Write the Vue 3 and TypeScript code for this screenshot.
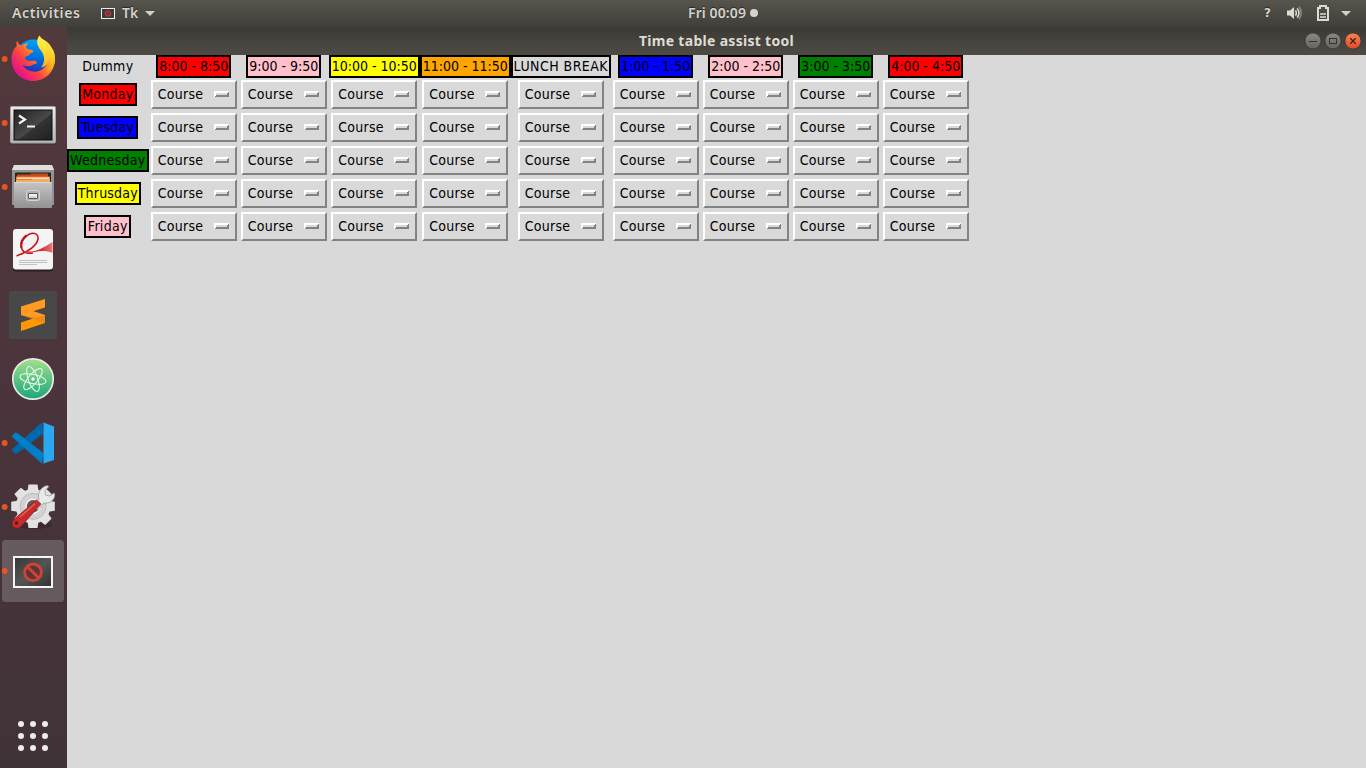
<script setup lang="ts">
interface Heading {
  text: string
  color: string
  spacing: number
  width: number
}

const times: Heading[] = [
  { text: '8:00 - 8:50', color: '#ff0000', spacing: 0, width: 75 },
  { text: '9:00 - 9:50', color: '#ffc0cb', spacing: 0, width: 75 },
  { text: '10:00 - 10:50', color: '#ffff00', spacing: 0, width: 91 },
  { text: '11:00 - 11:50', color: '#ffa500', spacing: 0, width: 91 },
  { text: 'LUNCH BREAK', color: '#d9d9d9', spacing: 0.45, width: 100 },
  { text: '1:00 - 1:50', color: '#0000ff', spacing: 0, width: 75 },
  { text: '2:00 - 2:50', color: '#ffc0cb', spacing: 0, width: 75 },
  { text: '3:00 - 3:50', color: '#008000', spacing: 0, width: 75 },
  { text: '4:00 - 4:50', color: '#ff0000', spacing: 0, width: 75 },
]

const days: Heading[] = [
  { text: 'Monday', color: '#ff0000', spacing: 0.25, width: 58 },
  { text: 'Tuesday', color: '#0000ff', spacing: 0.25, width: 61 },
  { text: 'Wednesday', color: '#008000', spacing: 0.3, width: 82 },
  { text: 'Thrusday', color: '#ffff00', spacing: 0.2, width: 66 },
  { text: 'Friday', color: '#ffc0cb', spacing: 0.3, width: 47 },
]

const labelStyle = (h: Heading) => ({
  background: h.color,
  width: h.width + 'px',
  letterSpacing: h.spacing + 'px',
})

const gearTeeth = [0, 45, 90, 135, 180, 225, 270, 315]
const appDots = [0, 1, 2, 3, 4, 5, 6, 7, 8]
</script>

<template>
  <div class="desktop">
    <header class="topbar">
      <div class="top-left">
        <span class="activities">Activities</span>
        <svg class="tk-mini" width="14" height="11" viewBox="0 0 14 11">
          <rect x="0.5" y="0.5" width="13" height="10" fill="#3c3c3c" stroke="#eee" />
          <circle cx="7" cy="5.5" r="2.5" fill="none" stroke="#d0343a" stroke-width="1.2" />
          <path d="M5.3 3.8l3.4 3.4" stroke="#d0343a" />
        </svg>
        <span class="tk-name">Tk</span>
        <svg class="arrow" width="10" height="5" viewBox="0 0 10 5"><path d="M0 0h10L5 5z" fill="#d3d0ca" /></svg>
      </div>
      <div class="clock"><span>Fri 00:09</span><i class="clock-dot"></i></div>
      <div class="top-right">
        <span class="question">?</span>
        <svg class="volume" width="16" height="14" viewBox="0 0 16 14">
          <path d="M0 4.5h3L7 1v12L3 9.5H0z" fill="#dcdad5" />
          <path d="M8.5 4.3q1.8 2.7 0 5.4" stroke="#dcdad5" stroke-width="1.5" fill="none" />
          <path d="M10.2 2.4q3.4 4.6 0 9.2" stroke="#dcdad5" stroke-width="1.5" fill="none" />
          <path d="M12 .8q4.4 6.2 0 12.4" stroke="#8b8982" stroke-width="1.5" fill="none" />
        </svg>
        <svg class="battery" width="12" height="16" viewBox="0 0 12 16">
          <path d="M3 3V1h6v2h2v12H1V3z" fill="none" stroke="#dcdad5" stroke-width="2" />
          <path d="M3 9h6M3 12h6" stroke="#dcdad5" stroke-width="1.5" />
        </svg>
        <svg class="arrow" width="10" height="5" viewBox="0 0 10 5"><path d="M0 0h10L5 5z" fill="#d3d0ca" /></svg>
      </div>
    </header>

    <div class="body">
      <aside class="dock">
        <!-- Firefox -->
        <svg class="slot" viewBox="0 0 67 64">
          <defs>
            <linearGradient id="ffBody" x1="0.9" y1="0.1" x2="0.15" y2="0.75">
              <stop offset="0" stop-color="#ffd52e" /><stop offset=".4" stop-color="#ff9420" />
              <stop offset=".7" stop-color="#ff4242" /><stop offset="1" stop-color="#e61785" />
            </linearGradient>
            <linearGradient id="ffBlue" x1="0.6" y1="0" x2="0.4" y2="1">
              <stop offset="0" stop-color="#00a5ff" /><stop offset=".6" stop-color="#0061d6" /><stop offset="1" stop-color="#41158a" />
            </linearGradient>
            <linearGradient id="ffTail" x1="0" y1="0" x2="0" y2="1">
              <stop offset="0" stop-color="#fff44f" /><stop offset=".5" stop-color="#ffd42c" /><stop offset="1" stop-color="#ff9a1c" />
            </linearGradient>
          </defs>
          <circle class="run-dot" cx="4.700" cy="32" r="2.900" />
          <circle cx="33" cy="31" r="18.500" fill="url(#ffBlue)" />
          <path d="M17 13.500c-.8 2.500-.6 4-.2 5.500-3.500 3-5.500 8-5.300 14C12 45 21.500 54 33 54c12 0 22-9 22-22 0-5-1.500-9-4-12-1-2-3-4-5-5 3 7 4 14 2 20-2.500 7-9 10.500-15 9.500-6-.7-9.500-4-10.500-7 3 2 7 2.300 10 .5 2-1.300 4-1 4.500-2-.5-2-2-2.500-5-2.200-3 .2-5 .5-7-2-.2-2 2-3.500 4-3.200.5-2 2-2.500 4-3.500.3-1.500-.3-2.300-2-2.300-2.500-.2-4-.8-5-2 .2-2 1-3 2.500-4.500-3 0-5.500 1-7.500 2.500-2-1.500-3.200-3-4-5.300z" fill="url(#ffBody)" />
          <path d="M39.500 8.500c-4 5-2.500 10 1 14.500 4.500 5.500 5 12 .5 17.500 6-1 8-5 8.500-8 1 5-1 10-4 13 7-3 10-9 9.500-15-.5-5-2-8-4-10.500-1-3-3.500-5-6-6.500-2.500-1.500-4-2-5.500-5z" fill="url(#ffTail)" />
        </svg>

        <!-- Terminal -->
        <svg class="slot" viewBox="0 0 67 64">
          <defs>
            <linearGradient id="term" x1="0" y1="0" x2="1" y2="1">
              <stop offset="0" stop-color="#222" /><stop offset=".55" stop-color="#494949" /><stop offset=".56" stop-color="#333" /><stop offset="1" stop-color="#202020" />
            </linearGradient>
            <linearGradient id="silver" x1="0" y1="0" x2="0" y2="1">
              <stop offset="0" stop-color="#ececec" /><stop offset="1" stop-color="#b3b3b3" />
            </linearGradient>
          </defs>
          <circle class="run-dot" cx="4.700" cy="32" r="2.900" />
          <rect x="10" y="15.500" width="46" height="38" rx="1.500" fill="#2c2023" opacity=".5" />
          <rect x="10.500" y="15.500" width="45" height="36.500" rx="1.200" fill="url(#silver)" stroke="#a5a5a5" />
          <rect x="14" y="19" width="38" height="30" fill="url(#term)" stroke="#0d0d0d" />
          <path d="M19 24.500l6 4-6 4" fill="none" stroke="#f3f3f3" stroke-width="2.200" />
          <path d="M27 35.500h8" stroke="#f3f3f3" stroke-width="2" />
        </svg>

        <!-- Files -->
        <svg class="slot" viewBox="0 0 67 64">
          <defs>
            <linearGradient id="cab" x1="0" y1="0" x2="0" y2="1">
              <stop offset="0" stop-color="#c5c5c5" /><stop offset="1" stop-color="#929292" />
            </linearGradient>
          </defs>
          <circle class="run-dot" cx="4.700" cy="32" r="2.900" />
          <path d="M14 10h38l2 5v35H12V15z" fill="#929292" />
          <path d="M14 10h38l2 5H12z" fill="#dedede" />
          <rect x="15" y="17.500" width="36" height="12" rx="1" fill="#2a2523" />
          <path d="M17 19.500h13l1.500-1H48v4H17z" fill="#bf4e18" />
          <rect x="16" y="21.500" width="34" height="4" fill="#e77b2b" />
          <rect x="17" y="22.500" width="32" height="1.300" fill="#fff3e0" />
          <path d="M16 25h15l2-1h17v4H16z" fill="#efac64" />
          <rect x="14" y="27" width="38" height="26" rx="1" fill="url(#cab)" />
          <path d="M14.500 27.500h37" stroke="#d8d8d8" />
          <rect x="26.500" y="35.500" width="13" height="10" rx="2" fill="#b0b0b0" stroke="#d6d6d6" />
          <rect x="28.500" y="38.500" width="9" height="5" rx=".5" fill="#f2f2f2" stroke="#555" />
          <path d="M30 42h6" stroke="#bbb" />
        </svg>

        <!-- Document viewer -->
        <svg class="slot" viewBox="0 0 67 64">
          <defs>
            <linearGradient id="ribbon" x1="0" y1="0" x2="1" y2="0">
              <stop offset="0" stop-color="#d9474a" /><stop offset=".45" stop-color="#c7141b" /><stop offset="1" stop-color="#ee7775" />
            </linearGradient>
          </defs>
          <rect x="13" y="11" width="40" height="41.500" rx="3" fill="#292020" />
          <rect x="13" y="10" width="40" height="40.500" rx="3" fill="#f4f4f4" />
          <path d="M16.500 37c8-3 20-9 21.500-17 .8-5-4-7-8.500-5-6 2.600-9.500 9-8 14 1.500 4.500 6 6 11.500 5" fill="none" stroke="#c7141b" stroke-width="1.500" />
          <path d="M21.500 29c-1-5 1-9.500 5-12.500" fill="none" stroke="#c7141b" stroke-width="2.300" />
          <path d="M24 32c10 2 16-1 28.500-9v11c-9-4.500-18-.5-27 0z" fill="url(#ribbon)" />
          <path d="M19 43.500h28M19 45.500h28M19 47.500h18" stroke="#bcbcbc" stroke-width=".9" transform="translate(0 -2)" />
        </svg>

        <!-- Text editor -->
        <svg class="slot" viewBox="0 0 67 64">
          <rect x="9" y="8" width="48" height="48" rx="2.500" fill="#484848" />
          <path d="M21 39.500l15-5 9-2.500v8L21 48z" fill="#ff9800" />
          <path d="M21 23.500V32l24 8v-8l-12-4z" fill="#ed8a1a" />
          <path d="M21 23.500L45 16v8.500L33 28.300l12 3.900-9 2.600L21 32z" fill="#ff9b22" />
        </svg>

        <!-- Atom -->
        <svg class="slot" viewBox="0 0 67 64">
          <defs>
            <linearGradient id="atom" x1="0" y1="0" x2="0" y2="1">
              <stop offset="0" stop-color="#a4df8e" /><stop offset="1" stop-color="#19a878" />
            </linearGradient>
          </defs>
          <circle cx="33" cy="32" r="20.200" fill="url(#atom)" stroke="#ece8e8" stroke-width="1.700" />
          <g fill="none" stroke="#effff2" stroke-width="1">
            <ellipse cx="33" cy="32" rx="13.200" ry="4.700" transform="rotate(12 33 32)" />
            <ellipse cx="33" cy="32" rx="13.200" ry="4.700" transform="rotate(70 33 32)" />
            <ellipse cx="33" cy="32" rx="13.200" ry="4.700" transform="rotate(130 33 32)" />
          </g>
          <circle cx="33" cy="32" r="1.700" fill="#f5fff6" />
        </svg>

        <!-- Code editor -->
        <svg class="slot" viewBox="0 0 67 64">
          <circle class="run-dot" cx="4.700" cy="32" r="2.900" />
          <path d="M12.200 38.300L42 11.200l1.500 11.300-26.500 20-1.800 0-3-2.500z" fill="#0069ad" />
          <path d="M12.200 24.500l3-2.700 1.800 0L43.500 42 42 52.800 12.200 26z" fill="#007fc8" />
          <path d="M42 11l12 4.500v33.500L42 53c1 0 1.500-.8 1.500-1.800V13c0-1-.5-1.700-1.500-2z" fill="#2aa8f2" />
        </svg>

        <!-- Settings -->
        <svg class="slot" viewBox="0 0 67 64">
          <circle class="run-dot" cx="4.700" cy="32" r="2.900" />
          <ellipse cx="34" cy="50" rx="18" ry="4" fill="#2a1f22" opacity=".45" />
          <g fill="#e2e2e2">
            <path v-for="a in gearTeeth" :key="a" d="M27.500 16l1-6.500h9l1 6.500z" :transform="`rotate(${a} 33 31.300)`" />
            <circle cx="33" cy="31.300" r="17.300" />
          </g>
          <circle cx="33" cy="31.300" r="13" fill="#d2d2d2" stroke="#bdbdbd" />
          <circle cx="33" cy="31.300" r="7" fill="#64565a" stroke="#f2f2f2" stroke-width="1.500" />
          <path d="M33 31l6-7c-2-6 2-12 8-13.500l2 1-4 4 .5 4.500 4 1 4.500-3 .7 1c.5 6-5 10-11 9l-6 7z" fill="#e9e9e9" stroke="#929292" stroke-width=".7" />
          <path d="M36.500 25l4.500 4-20 22.500c-2.500 2.500-6 2-7.800 0-1.700-2-1.500-5 .8-7.200z" fill="#c72b2b" stroke="#811c20" stroke-width=".7" />
          <path d="M20 42l15-13.500" stroke="#e2605a" stroke-width="1.500" />
          <circle cx="16.500" cy="48" r="1.700" fill="#591417" />
        </svg>

        <!-- Tk window -->
        <svg class="slot active" viewBox="0 0 67 64">
          <defs>
            <linearGradient id="tkScreen" x1="0" y1="0" x2="1" y2="1">
              <stop offset="0" stop-color="#353535" /><stop offset=".5" stop-color="#555" /><stop offset="1" stop-color="#303030" />
            </linearGradient>
          </defs>
          <rect x="2" y="1" width="62" height="62" rx="3.500" fill="#675a5f" />
          <circle class="run-dot" cx="4.700" cy="32" r="2.900" />
          <rect x="14" y="18" width="38" height="30" fill="url(#tkScreen)" stroke="#f5f5f5" stroke-width="2" />
          <circle cx="33" cy="33.300" r="8.300" fill="#5e3434" stroke="#cf4339" stroke-width="2.800" />
          <path d="M27.500 27.800l11 11" stroke="#cf4339" stroke-width="3" />
        </svg>

        <div class="app-grid"><i v-for="d in appDots" :key="d"></i></div>
      </aside>

      <main class="window">
        <div class="titlebar">
          <span class="title">Time table assist tool</span>
          <svg class="controls" width="62" height="20" viewBox="0 0 62 20">
            <defs>
              <linearGradient id="grayBtn" x1="0" y1="0" x2="0" y2="1"><stop offset="0" stop-color="#8b8982" /><stop offset="1" stop-color="#65635d" /></linearGradient>
              <linearGradient id="redBtn" x1="0" y1="0" x2="0" y2="1"><stop offset="0" stop-color="#f78354" /><stop offset="1" stop-color="#e14c20" /></linearGradient>
            </defs>
            <circle cx="10" cy="10" r="8" fill="url(#grayBtn)" stroke="#33322e" stroke-width=".7" />
            <path d="M6 10.500h8" stroke="#34332f" />
            <circle cx="30" cy="10" r="8" fill="url(#grayBtn)" stroke="#33322e" stroke-width=".7" />
            <rect x="26.500" y="7.500" width="7" height="5" fill="none" stroke="#34332f" />
            <circle cx="50" cy="10" r="8" fill="url(#redBtn)" stroke="#33322e" stroke-width=".7" />
            <path d="M47.300 7.300l5.400 5.400m0-5.400l-5.400 5.400" stroke="#422017" stroke-width="1.300" />
          </svg>
        </div>

        <div class="timetable">
          <div class="cell"><span class="dummy">Dummy</span></div>
          <div v-for="t in times" :key="t.text" class="cell">
            <span class="tag" :style="labelStyle(t)">{{ t.text }}</span>
          </div>
          <template v-for="d in days" :key="d.text">
            <div class="cell">
              <span class="tag" :style="labelStyle(d)">{{ d.text }}</span>
            </div>
            <div v-for="t in times" :key="t.text" class="cell">
              <button class="option" type="button">
                <span>Course</span>
                <svg width="15" height="6" viewBox="0 0 15 6" shape-rendering="crispEdges">
                  <rect width="15" height="6" fill="#d9d9d9" />
                  <path d="M0 6V0h15l-2 2H2v2z" fill="#fff" />
                  <path d="M0 6l2-2h11V2l2-2v6z" fill="#828282" />
                </svg>
              </button>
            </div>
          </template>
        </div>
      </main>
    </div>
  </div>
</template>

<style>
html,
body {
  margin: 0;
  overflow: hidden;
}
</style>

<style scoped>
* {
  box-sizing: border-box;
}
.desktop {
  width: 1366px;
  height: 768px;
  display: flex;
  flex-direction: column;
  background: #d9d9d9;
  overflow: hidden;
}
.topbar {
  height: 27px;
  flex: none;
  display: grid;
  grid-template-columns: 688px auto 1fr;
  background: linear-gradient(#57544c, #403f3a);
  color: #d6d3cc;
  font: 600 14px/21px "Noto Sans", "Open Sans", sans-serif;
  text-shadow: 0 -1px 1px #292825;
}
.top-left {
  display: flex;
  align-items: center;
  padding-left: 12px;
}
.activities {
  width: 68px;
  letter-spacing: 0.600px;
  white-space: nowrap;
  padding-bottom: 3px;
}
.tk-mini {
  margin-left: 21px;
}
.tk-name {
  margin-left: 7px;
  width: 18px;
  padding-bottom: 3px;
}
.top-left .arrow {
  margin-left: 5px;
}
.clock {
  display: flex;
  align-items: center;
  white-space: nowrap;
  letter-spacing: 0.100px;
}
.clock span {
  padding-bottom: 3px;
}
.clock-dot {
  width: 8px;
  height: 8px;
  margin: 0 0 1px 4px;
  border-radius: 50%;
  background: #d6d3cd;
}
.top-right {
  display: flex;
  align-items: center;
  justify-content: flex-end;
  padding-right: 15px;
}
.question {
  font: 700 12px/21px "DejaVu Sans", sans-serif;
  margin-right: 16px;
}
.volume {
  margin-right: 14px;
}
.battery {
  margin-right: 12px;
}
.volume,
.battery {
  margin-bottom: 2px;
}
.body {
  flex: 1;
  display: flex;
  min-height: 0;
}
.dock {
  width: 67px;
  flex: none;
  display: flex;
  flex-direction: column;
  background: linear-gradient(#52393c, #4b343b 48%, #453339 75%, #403338);
}
.slot {
  width: 67px;
  height: 64px;
  flex: none;
  display: block;
}
.run-dot {
  fill: #e95420;
}
.app-grid {
  margin: auto 0 17px 18px;
  display: grid;
  grid-template-columns: repeat(3, 6px);
  gap: 6px;
}
.app-grid i {
  height: 6px;
  border-radius: 50%;
  background: #eeeced;
}
.window {
  flex: 1;
  min-width: 0;
  background: #d9d9d9;
}
.titlebar {
  height: 28px;
  display: grid;
  grid-template-columns: 1fr auto 1fr;
  align-items: center;
  background: linear-gradient(#3b3a36, #4d4b44);
  color: #dfdbd2;
  font: 700 14px/28px "Noto Sans", "Open Sans", sans-serif;
  letter-spacing: 0.300px;
}
.title {
  grid-column: 2;
  white-space: nowrap;
}
.controls {
  justify-self: end;
  margin-right: 1px;
}
.timetable {
  display: grid;
  grid-template-columns: 82px 90px 90px 91px 91px 100px 90px 90px 90px 90px;
  grid-template-rows: 23px repeat(5, 33px);
  font: 14px/17px "DejaVu Sans Condensed", "DejaVu Sans", sans-serif;
  font-stretch: semi-condensed;
  color: #000;
}
.cell {
  display: flex;
  align-items: center;
  justify-content: center;
  padding-right: 0.400px;
}
.tag {
  height: 23px;
  flex: none;
  border: 2px solid #000;
  padding: 1px 0;
  display: flex;
  justify-content: center;
  white-space: nowrap;
}
.dummy {
  letter-spacing: 0.3px;
}
.option {
  width: 86px;
  height: 29px;
  display: flex;
  align-items: center;
  justify-content: space-between;
  margin: 0;
  padding: 0 6px 0 5px;
  border: 2px solid;
  border-color: #fff #828282 #828282 #fff;
  border-radius: 0;
  background: #d9d9d9;
  color: #000;
  font: inherit;
  letter-spacing: 0.25px;
}
.option svg {
  margin-bottom: 2px;
}
</style>
